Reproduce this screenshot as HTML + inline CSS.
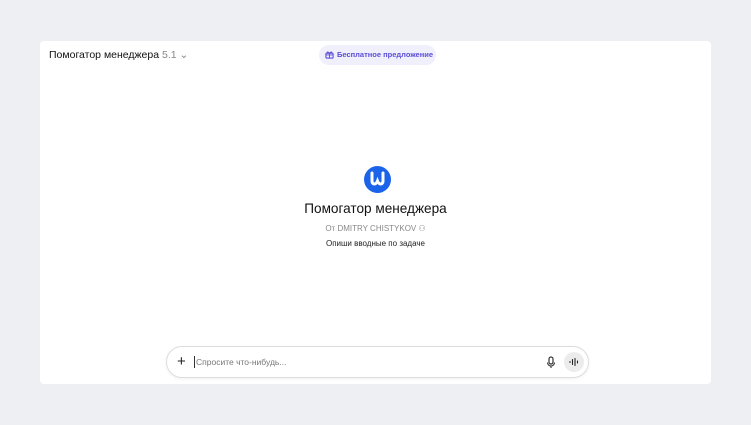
<!DOCTYPE html>
<html><head><meta charset="utf-8"><style>
*{margin:0;padding:0;box-sizing:border-box}
body{width:751px;height:425px;background:#eeeff3;font-family:"Liberation Sans","Noto Sans CJK SC",sans-serif;position:relative;overflow:hidden}
.card{position:absolute;left:40px;top:41px;width:671px;height:343px;background:#fff;border-radius:4px}
.t{position:absolute;left:9px;top:8px;font-size:10.5px;color:#111}
.t span{color:#888}
.pill{position:absolute;left:279px;top:4px;width:117px;height:20px;border-radius:10px;background:#f0effc;color:#5b4ed6;font-size:7.5px;font-weight:600;line-height:20px;padding-left:18px}
.pill svg{position:absolute;left:6px;top:5px}
.logo{position:absolute;left:324px;top:125px;width:27px;height:27px;border-radius:50%;background:#1b63e8}
.h{position:absolute;left:0;width:100%;text-align:center}
.input{position:absolute;left:126px;top:305px;width:423px;height:32px;border:1px solid #ddd;border-radius:16px;background:#fff;box-shadow:0 1px 3px rgba(0,0,0,.06)}
</style></head><body>
<div class="card">
<div class="t">Помогатор менеджера <span>5.1 ⌄</span></div>
<div class="pill"><svg width="9" height="9" viewBox="0 0 10 10"><rect x="1" y="3.5" width="8" height="5.5" rx="1" fill="none" stroke="#5b4ed6" stroke-width="1.2"/><path d="M5 3.5V9M1 5.5h8M5 3.5C3 1 1.5 2.5 3 3.5M5 3.5C7 1 8.5 2.5 7 3.5" fill="none" stroke="#5b4ed6" stroke-width="1"/></svg>Бесплатное предложение</div>
<div class="logo"><svg width="27" height="27" viewBox="0 0 27 27"><path d="M8 7v8c0 4 4 4 5.5 0c1.5 4 5.5 4 5.5 0V7" fill="none" stroke="#fff" stroke-width="3" stroke-linecap="round"/></svg></div>
<div class="h" style="top:160px;font-size:13.6px;color:#111">Помогатор менеджера</div>
<div class="h" style="top:183px;font-size:8px;color:#888">От DMITRY CHISTYKOV ⚇</div>
<div class="h" style="top:198px;font-size:8px;color:#222">Опиши вводные по задаче</div>
<div class="input">
<div style="position:absolute;left:10px;top:6px;font-size:15px;color:#222">+</div>
<div style="position:absolute;left:27px;top:9px;width:1px;height:12px;background:#333"></div>
<div style="position:absolute;left:29px;top:10px;font-size:8.5px;color:#777">Спросите что-нибудь...</div>
<svg style="position:absolute;left:379px;top:9px" width="10" height="13" viewBox="0 0 10 13"><rect x="3" y="1" width="4" height="7" rx="2" fill="none" stroke="#333" stroke-width="1.2"/><path d="M1.5 6.5a3.5 3.5 0 007 0M5 10v2" fill="none" stroke="#333" stroke-width="1.1"/></svg>
<div style="position:absolute;left:397px;top:5px;width:20px;height:20px;border-radius:50%;background:#ececec"><svg width="20" height="20" viewBox="0 0 20 20"><path d="M6 9.5v1M8.5 7.5v5M11 6.5v7M13.5 9v2" stroke="#222" stroke-width="1.1" stroke-linecap="round"/></svg></div>
</div>
</div>
</body></html>
